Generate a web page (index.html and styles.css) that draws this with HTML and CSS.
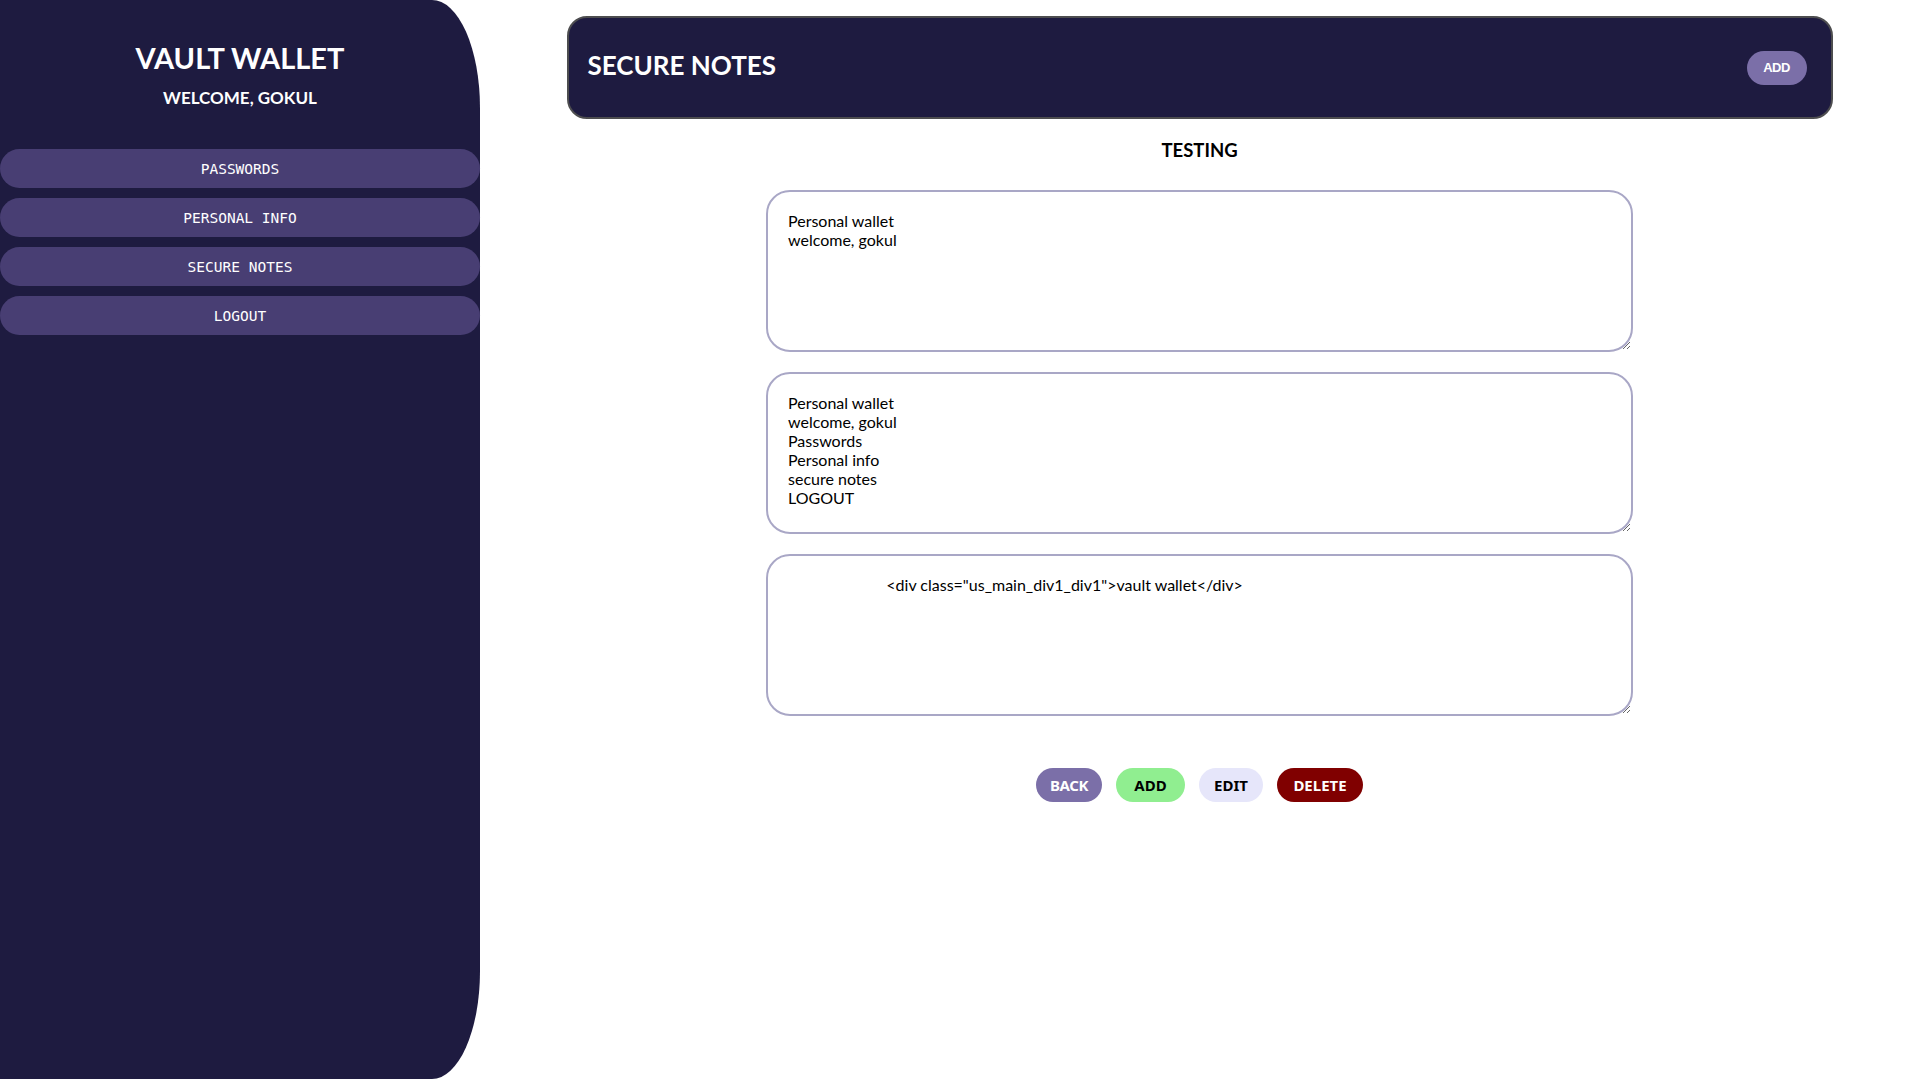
FILE: index.html
```html
<!DOCTYPE html>
<html lang="en">
<head>
<meta charset="utf-8">
<title>Vault Wallet - Secure Notes</title>
<link rel="stylesheet" href="styles.css">
</head>
<body>
<aside class="sidebar">
  <div class="brand">VAULT WALLET</div>
  <div class="welcome">WELCOME, GOKUL</div>
  <nav class="nav">
    <button class="nav-btn">PASSWORDS</button>
    <button class="nav-btn">PERSONAL INFO</button>
    <button class="nav-btn">SECURE NOTES</button>
    <button class="nav-btn">LOGOUT</button>
  </nav>
</aside>
<main class="main">
  <header class="topbar">
    <div class="topbar-title">SECURE NOTES</div>
    <button class="topbar-add">ADD</button>
  </header>
  <div class="note-title">TESTING</div>
  <div class="notes">
    <textarea class="note">Personal wallet
welcome, gokul</textarea>
    <textarea class="note">Personal wallet
welcome, gokul
Passwords
Personal info
secure notes
LOGOUT</textarea>
    <textarea class="note">                        &lt;div class="us_main_div1_div1"&gt;vault wallet&lt;/div&gt;</textarea>
  </div>
  <div class="actions">
    <button class="act act-back">BACK</button>
    <button class="act act-add">ADD</button>
    <button class="act act-edit">EDIT</button>
    <button class="act act-delete">DELETE</button>
  </div>
</main>
</body>
</html>
```
FILE: styles.css
```css
html, body {
  margin: 0;
  padding: 0;
  height: 100%;
  background: #ffffff;
}
body {
  display: flex;
  font-family: Lato, "Noto Sans", sans-serif;
  overflow: hidden;
}
.sidebar {
  width: 480px;
  flex-shrink: 0;
  height: 1079px;
  background: #1e1b40;
  border-radius: 0 10% 10% 0;
  display: flex;
  flex-direction: column;
  align-items: center;
  color: #ffffff;
}
.brand {
  margin-top: 40px;
  font-size: 29px;
  font-weight: 700;
  line-height: 36px;
}
.welcome {
  margin-top: 11px;
  font-size: 17px;
  font-weight: 700;
  line-height: 22px;
}
.nav {
  margin-top: 40px;
  width: 100%;
  display: flex;
  flex-direction: column;
  gap: 10px;
}
.nav-btn {
  width: 100%;
  height: 39px;
  border: none;
  border-radius: 20px;
  background: #483e73;
  color: #ffffff;
  font-family: "DejaVu Sans Mono", monospace;
  font-size: 14.5px;
  padding: 0;
  cursor: pointer;
}
.main {
  flex: 1;
  display: flex;
  flex-direction: column;
  align-items: center;
}
.topbar {
  box-sizing: border-box;
  width: 1266px;
  height: 103px;
  margin-top: 16px;
  background: #1e1b40;
  border: 2px solid #4d4d4f;
  border-radius: 20px;
  display: flex;
  align-items: center;
  justify-content: space-between;
  padding: 0 24px 0 19px;
}
.topbar-title {
  color: #ffffff;
  font-size: 26px;
  font-weight: 700;
  margin-bottom: 5px;
}
.topbar-add {
  width: 60px;
  height: 34px;
  border: none;
  border-radius: 17px;
  background: #7b6fa8;
  color: #ffffff;
  font-family: "Liberation Sans", sans-serif;
  font-weight: 700;
  font-size: 13px;
  letter-spacing: -0.5px;
  padding: 0;
}
.note-title {
  margin-top: 19px;
  font-size: 18.5px;
  font-weight: 700;
  line-height: 24px;
  color: #000000;
}
.notes {
  margin-top: 28px;
  display: flex;
  flex-direction: column;
  gap: 20px;
}
.note {
  box-sizing: border-box;
  width: 867px;
  height: 162px;
  border: 2px solid #a9a7c6;
  border-radius: 24px;
  padding: 19px 20px;
  font-family: Lato, "Noto Sans", sans-serif;
  font-size: 16px;
  line-height: 19px;
  color: #000000;
  background: #ffffff;
  outline: none;
  display: block;
  margin: 0;
}
.actions {
  margin-top: 52px;
  display: flex;
  gap: 14px;
}
.act {
  height: 34px;
  border: none;
  border-radius: 17px;
  font-family: "Noto Sans", sans-serif;
  font-weight: 700;
  font-size: 15px;
  padding: 0;
}
.act-back { width: 66px; background: #7b6fa8; color: #ffffff; letter-spacing: -0.4px; }
.act-add { width: 69px; background: #90ee90; color: #000000; }
.act-edit { width: 64px; background: #e6e6fa; color: #000000; }
.act-delete { width: 86px; background: #800000; color: #ffffff; }
```
